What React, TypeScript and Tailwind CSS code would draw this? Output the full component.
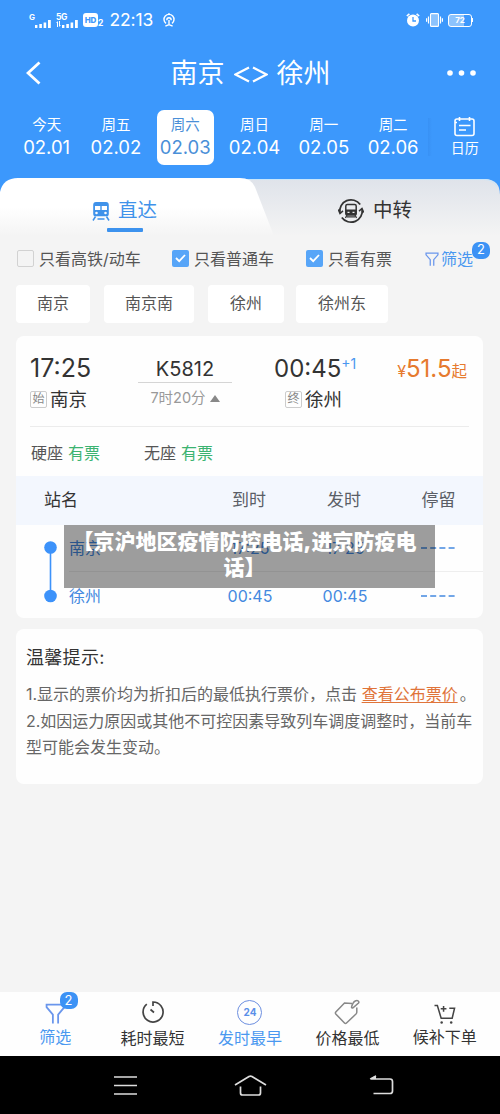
import { clsx } from "clsx";
import type { ReactNode } from "react";

const days = [
  { label: "今天", date: "02.01" },
  { label: "周五", date: "02.02" },
  { label: "周六", date: "02.03", active: true },
  { label: "周日", date: "02.04" },
  { label: "周一", date: "02.05" },
  { label: "周二", date: "02.06" },
];

const stations = [
  { name: "南京", width: "w-[74px]" },
  { name: "南京南", width: "w-[90px]" },
  { name: "徐州", width: "w-[76px]" },
  { name: "徐州东", width: "w-[92px]" },
];

const stops = [
  { name: "南京", arrive: "17:25", depart: "17:25" },
  { name: "徐州", arrive: "00:45", depart: "00:45" },
];

function SignalBars() {
  return (
    <svg width="17" height="8" viewBox="0 0 17 8" fill="currentColor">
      <rect x="0" y="5" width="2.4" height="3" />
      <rect x="4.3" y="4" width="2.6" height="4" />
      <rect x="8.6" y="2.5" width="2.6" height="5.5" />
      <rect x="13" y="0" width="2.8" height="8" />
    </svg>
  );
}

function StatusBar() {
  return (
    <div className="flex h-10 items-center pl-[29px] pr-[27px]">
      <div className="flex h-[15px] items-end">
        <span className="self-start text-[8px] font-bold leading-[8px]">G</span>
        <SignalBars />
      </div>
      <div className="ml-[4px] flex h-[15px] items-end">
        <div className="flex h-[15px] w-3 flex-col self-start">
          <span className="text-[8.5px] font-bold leading-[8px] tracking-[-0.5px]">5G</span>
          <svg width="5" height="6" viewBox="0 0 5 6" fill="currentColor">
            <path d="M0 2 2 0v6H1V2zM3 0h1v4h1L3 6z" />
          </svg>
        </div>
        <div className="-ml-[6px]"><SignalBars /></div>
      </div>
      <div className="ml-[4px] flex items-end">
        <span className="flex h-[14px] w-[15px] items-center justify-center rounded-[3px] bg-white text-[8px] font-extrabold text-[#3c98fc]">HD</span>
        <span className="text-[8.5px] font-bold leading-[7px]">2</span>
      </div>
      <span className="ml-[6px] text-[17.5px] tracking-[-0.1px]">22:13</span>
      <svg className="ml-[10px]" width="12" height="15" viewBox="0 0 12 15" fill="none" stroke="currentColor" strokeWidth="1.4">
        <path d="M3 10.400A5 5 0 1 1 9 10.400M3.800 7.200q0-2.400 2.200-2.400t2.200 2.400M6 7v5M2.400 13.200 6 11.500l3.600 1.700M6 0v2" />
      </svg>
      <div className="ml-auto flex items-center gap-[6px]">
        <svg width="14" height="14" viewBox="0 0 14 14" fill="none">
          <circle cx="7" cy="7.6" r="6" fill="white" />
          <path d="M.8 3 3.4.8M13.2 3 10.6.8" stroke="white" strokeWidth="1.6" />
          <path d="M7 4v4h3" stroke="#3c98fc" strokeWidth="1.3" />
        </svg>
        <svg width="17" height="14" viewBox="0 0 17 14" fill="none" stroke="white">
          <rect x="4.5" y=".6" width="8" height="12.8" rx="1" fill="#8cc3fd" strokeWidth="1.1" />
          <path d="M2.5 3.5v7M.6 5.2v3.6M14.5 3.5v7M16.4 5.2v3.6" strokeWidth="1.2" />
        </svg>
        <div className="-ml-[1px] flex items-center">
          <span className="flex h-[13px] w-[24px] items-center justify-center rounded-[3px] border border-white bg-[linear-gradient(90deg,#8cc3fd_70%,transparent_70%)] text-[8px] font-bold">72</span>
          <span className="h-1 w-[1px] bg-white" />
        </div>
      </div>
    </div>
  );
}

function Header() {
  return (
    <div className="h-[178px] bg-[#3c98fc] text-white">
      <StatusBar />
      <div className="flex h-[66px] items-center justify-between pl-[26px] pr-[24px]">
        <svg width="16" height="24" viewBox="0 0 16 24" fill="none" stroke="white" strokeWidth="2.8">
          <path d="M13.500 1.500 2 12l11.500 10.500" />
        </svg>
        <h1 className="ml-[12px] mt-[3px] flex items-center text-[27px]">
          南京
          <svg className="mx-[9px]" width="34" height="17" viewBox="0 0 34 17" fill="none" stroke="white" strokeWidth="2.200">
            <path d="M15 1.500 1.500 8.500l13.500 7M19 1.500l13.500 7-13.500 7" />
          </svg>
          徐州
        </h1>
        <svg width="29" height="6" viewBox="0 0 29 6" fill="white">
          <circle cx="3" cy="3" r="2.8" />
          <circle cx="14.5" cy="3" r="2.8" />
          <circle cx="26" cy="3" r="2.8" />
        </svg>
      </div>
      <div className="flex pl-[12px] pt-[4px]">
        {days.map((d) => (
          <div key={d.date} className="flex w-[69.3px] justify-center">
            <div
              className={clsx(
                "flex h-[55px] w-[57px] flex-col items-center rounded-[7px] pt-[4px]",
                d.active && "bg-white text-[#4a8fd8]"
              )}
            >
              <span className="text-[14.5px] leading-[21px]">{d.label}</span>
              <span className="whitespace-nowrap text-[18.5px] leading-[24px]">{d.date}</span>
            </div>
          </div>
        ))}
        <div className="mt-2 h-[38px] w-[4px] bg-gradient-to-r from-[#3891f4] to-[#3c98fc]" />
        <div className="ml-[19px] flex flex-col items-center pt-[6px]">
          <svg width="21" height="21" viewBox="0 0 21 21" fill="none" stroke="white" strokeWidth="1.6">
            <rect x="1" y="3" width="19" height="16.5" rx="2" />
            <path d="M1 6.500h2M5.500 1v4M15.500 1v4M5 9.500h11.500M5 14h7" />
          </svg>
          <span className="mt-[1px] text-[14px] leading-[20px]">日历</span>
        </div>
      </div>
    </div>
  );
}

function TrainIcon() {
  return (
    <svg width="18" height="19" viewBox="0 0 18 19">
      <path fill="#3f92ea" fillRule="evenodd" d="M4 0h10q2.800 0 2.800 3v9.200q0 2-2 2H3.200q-2 0-2-2V3Q1.200 0 4 0Zm-1 4v4h5.300V4Zm6.700 0v4H15V4ZM4.500 9.700a1.300 1.300 0 1 0 0 2.600 1.300 1.300 0 0 0 0-2.600Zm9 0a1.300 1.300 0 1 0 0 2.600 1.300 1.300 0 0 0 0-2.600Z" />
      <path stroke="#3f92ea" strokeWidth="1.5" d="m3.500 14.500-2.500 4M14.500 14.500l2.500 4M5.500 17h7" />
    </svg>
  );
}

function TransferIcon() {
  return (
    <svg width="26" height="26" viewBox="0 0 26 26" fill="none" stroke="#333" strokeWidth="1.8">
      <path d="M1.900 15A11.300 11.300 0 0 1 22.200 6.500M24.100 11A11.300 11.300 0 0 1 3.800 19.500" />
      <path d="M.2 11.500 2 15.500l3-2.600M25.800 14.500 24 10.500l-3 2.600" strokeWidth="1.400" />
      <rect x="7.800" y="6.500" width="10.400" height="10.500" rx="1.500" strokeWidth="1.500" />
      <path d="M8 12h10v4.500H8z" fill="#333" strokeWidth="1" />
      <path d="M9.500 14.300h2M14.500 14.300h2" stroke="#eee" strokeWidth="1.200" />
      <path d="m9 17-1.500 3M17 17l1.500 3M9 18.800h8" strokeWidth="1.300" />
    </svg>
  );
}

function Tabs() {
  return (
    <div className="relative h-[58px] bg-[#f4f4f4]">
      <svg className="absolute inset-0" width="500" height="58" viewBox="0 0 500 58">
        <defs>
          <linearGradient id="left" x2="0" y2="1">
            <stop offset=".5" stopColor="#fff" />
            <stop offset="1" stopColor="#f4f4f4" />
          </linearGradient>
          <linearGradient id="right" x2="0" y2="1">
            <stop offset="0" stopColor="#dfe3ea" />
            <stop offset="1" stopColor="#f4f4f4" />
          </linearGradient>
        </defs>
        <path fill="#3c98fc" d="M0 0h500v30H0z" />
        <path fill="url(#right)" d="M230 1h256q14 1 14 16v41H230z" />
        <path stroke="#c9e6fb" fill="none" d="M248 1.500h236q9 0 13 7" />
        <path fill="url(#left)" d="M0 14Q3 0 18 0h222q11 0 15 9l19 49H0z" />
      </svg>
      <div className="relative flex h-full text-[19.5px]">
        <div className="flex w-[250px] flex-col items-center">
          <div className="mt-[18px] flex h-[30px] items-center gap-[8px] pr-[1px] text-[#3f92ea]">
            <TrainIcon />
            <span>直达</span>
          </div>
          <span className="mt-[2px] h-[4px] w-[36px] rounded-[1px] bg-[#3c92ee]" />
        </div>
        <div className="mt-[18px] flex h-[30px] w-[250px] items-center justify-center gap-[9px] text-[#333]">
          <TransferIcon />
          <span>中转</span>
        </div>
      </div>
    </div>
  );
}

function CheckBox({ checked, children }: { checked?: boolean; children: ReactNode }) {
  return (
    <div className="flex items-center gap-[5px] whitespace-nowrap">
      <span
        className={clsx(
          "flex h-[17px] w-[17px] items-center justify-center rounded-[2px]",
          checked ? "bg-[#57a5f8]" : "border border-[#d2d2d2]"
        )}
      >
        {checked && (
          <svg width="11" height="9" viewBox="0 0 11 9" fill="none" stroke="white" strokeWidth="1.8">
            <path d="m1 4 3.200 3.200L10 1" />
          </svg>
        )}
      </span>
      <span>{children}</span>
    </div>
  );
}

function Funnel({ size }: { size: number }) {
  return (
    <svg width={size} height={size} viewBox="0 0 20 20" fill="none" stroke="#6a96ec" strokeWidth={size > 16 ? 1.7 : 1.8}>
      <path d="M7.500 19.500v-8.500L1.500 4V1.500h17V4l-6 7v8.500" />
    </svg>
  );
}

function Filters() {
  return (
    <div className="text-[16px] text-[#555]">
      <div className="flex h-[45px] items-center pl-[17px]">
        <div className="w-[155px]"><CheckBox>只看高铁/动车</CheckBox></div>
        <div className="w-[134px]"><CheckBox checked>只看普通车</CheckBox></div>
        <div className="w-[119px]"><CheckBox checked>只看有票</CheckBox></div>
        <div className="relative flex items-center gap-[2px] whitespace-nowrap text-[#4a98f0]">
          <Funnel size={14} />
          <span>筛选</span>
          <span className="absolute -top-[5px] left-[47px] flex h-[17px] w-[18px] items-center justify-center rounded-[7px] bg-[#3c92f5] text-[13px] text-white">2</span>
        </div>
      </div>
      <div className="flex pl-[16px] pt-[4px]">
        {stations.map((s, i) => (
          <div
            key={s.name}
            className={clsx("flex h-[38px] items-center justify-center rounded-[4px] bg-white pb-[2px]", s.width, i < 2 ? "mr-[14px]" : "mr-[12px]")}
          >
            {s.name}
          </div>
        ))}
      </div>
    </div>
  );
}

function Tag({ children }: { children: ReactNode }) {
  return (
    <span className="mr-[3px] flex h-[17px] w-[17px] items-center justify-center rounded-[2px] border border-[#ccc] text-[12px] leading-none text-[#888]">
      {children}
    </span>
  );
}

function TrainCard() {
  return (
    <div className="mx-4 mt-[13px] h-[282px] w-[467px] overflow-hidden rounded-[8px] bg-[#fefefe]">
      <div className="mx-[14px] flex h-[91px] border-b border-[#ececec] pt-[18px] text-[#333]">
        <div className="w-[108px]">
          <div className="text-[25px] leading-[29px]">17:25</div>
          <div className="mt-[2px] flex items-center text-[18.5px] leading-[28px]"><Tag>始</Tag>南京</div>
        </div>
        <div className="flex w-[94px] flex-col items-center">
          <div className="flex h-[29px] w-full items-center justify-center border-b border-[#d5d5d5] pt-[2px] text-[20px]">K5812</div>
          <div className="mt-[3px] flex items-center gap-[4px] text-[14.5px] leading-[24px] text-[#999]">
            7时20分
            <svg width="10" height="7" viewBox="0 0 10 7" fill="#888"><path d="M5 0l5 7H0z" /></svg>
          </div>
        </div>
        <div className="w-[122px] pl-[42px]">
          <div className="flex whitespace-nowrap text-[24px] leading-[29px]">
            00:45<span className="text-[14px] leading-[20px] text-[#4a98f0]">+1</span>
          </div>
          <div className="ml-[11px] mt-[2px] flex items-center whitespace-nowrap text-[18.5px] leading-[28px]"><Tag>终</Tag>徐州</div>
        </div>
        <div className="ml-auto mr-[2px] flex h-[29px] items-baseline whitespace-nowrap text-[24px] leading-[29px] text-[#e67a2e]">
          <span className="text-[16px]">¥</span>51.5<span className="text-[15.5px]">起</span>
        </div>
      </div>
      <div className="flex h-[49px] gap-[44px] pl-[15px] pt-[14px] text-[16px] leading-[24px] text-[#555]">
        <div>硬座<span className="ml-[5px] text-[#3cb371]">有票</span></div>
        <div>无座<span className="ml-[5px] text-[#3cb371]">有票</span></div>
      </div>
      <div className="grid h-[49px] grid-cols-[185px_96px_94px_93px] items-center bg-[#f3f7fe] text-center text-[17px] text-[#5a5e66]">
        <span className="pl-[28px] text-left text-[#333]">站名</span>
        <span>到时</span>
        <span>发时</span>
        <span className="pl-[2px]">停留</span>
      </div>
      <div className="flex pl-[28px] text-[16px] text-[#4489e0]">
        <svg className="mt-[15px] shrink-0" width="13" height="64" viewBox="0 0 13 64" fill="#3c92fa">
          <path d="M5.700 7h1.600v50H5.700z" />
          <circle cx="6.500" cy="7.500" r="6.300" />
          <circle cx="6.500" cy="56" r="6.300" />
        </svg>
        <div className="ml-[12px] w-[414px]">
          {stops.map((s, i) => (
            <div
              key={s.name}
              className={clsx(
                "grid h-[47px] grid-cols-[133px_96px_94px_91px] items-center text-center",
                i === 0 && "border-b border-[#eee] pb-[1px]"
              )}
            >
              <span className="text-left">{s.name}</span>
              <span>{s.arrive}</span>
              <span>{s.depart}</span>
              <svg className="mx-auto" width="34" height="2" viewBox="0 0 34 2">
                <path d="M0 1h34" stroke="#4489e0" strokeWidth="1.500" strokeDasharray="6 3.200" />
              </svg>
            </div>
          ))}
        </div>
      </div>
    </div>
  );
}

function Tips() {
  return (
    <div className="mx-4 mt-[11px] h-[155px] w-[467px] rounded-[8px] bg-[#fefefe] pl-[10px] pt-[16px]">
      <h2 className="text-[18px] leading-[26px] tracking-[0.3px] text-[#333]">温馨提示:</h2>
      <div className="mt-[10px] whitespace-nowrap text-[16px] leading-[26.5px] text-[#666]">
        <p>
          1.显示的票价均为折扣后的最低执行票价，点击 <a className="text-[#e0743a] underline underline-offset-2">查看公布票价</a>
          <span className="ml-[2px]">。</span>
        </p>
        <p>2.如因运力原因或其他不可控因素导致列车调度调整时，当前车</p>
        <p>型可能会发生变动。</p>
      </div>
    </div>
  );
}

function SortItem({ icon, label, active }: { icon: ReactNode; label: string; active?: boolean }) {
  return (
    <div className={clsx("flex flex-col items-center", active ? "text-[#4a98f0]" : "text-[#333]")}>
      <div className="flex h-[26px] items-center">{icon}</div>
      <span className="mt-[1px] text-[16px] leading-[24px]">{label}</span>
    </div>
  );
}

function BottomBar() {
  return (
    <div className="grid h-[64px] grid-cols-5 bg-[#fefefe] px-[6.500px] pt-[7px]">
      <div className="relative -mt-[1px]">
        <SortItem active label="筛选" icon={<span className="mt-[4px]"><Funnel size={21} /></span>} />
        <span className="absolute -top-[6px] left-[53px] flex h-[17px] w-[18px] items-center justify-center rounded-[7px] bg-[#3c92f5] text-[13px] text-white">2</span>
      </div>
      <SortItem
        label="耗时最短"
        icon={
          <svg width="22" height="22" viewBox="0 0 22 22" fill="none" stroke="#444" strokeWidth="1.700">
            <path d="M11 5V1a10 10 0 1 1-6.200 2.200M8.500 8.500l3.500 3" />
          </svg>
        }
      />
      <SortItem
        active
        label="发时最早"
        icon={
          <span className="flex h-[25px] w-[25px] items-center justify-center rounded-full border-[1.500px] border-[#6d8fe0] text-[10px] font-bold text-[#5a8fe8]">24</span>
        }
      />
      <SortItem
        label="价格最低"
        icon={
          <svg width="26" height="26" viewBox="0 0 26 26" fill="none" stroke="#888" strokeWidth="1.500">
            <path d="M18 4.500 10.500 4 1.800 13q-.8 1 0 2l8.700 9q1 1 2 0l9.500-9q1-1 .8-2.500v-4" />
            <path d="M17.500 8q0 1.500 1.500.8L24.500 4q.8-1-.3-2t-3 0Q19 3 17.500 8" />
          </svg>
        }
      />
      <div className="-mt-[1px]">
        <SortItem
          label="候补下单"
          icon={
            <svg className="mt-[6px]" width="22" height="21" viewBox="0 0 23 22" fill="none" stroke="#444" strokeWidth="1.600">
              <path d="M.5 1.500h3l4 13.500h11.500l2.500-10.500h-5.500M10 2v6M7 5h6" />
              <circle cx="8" cy="19.500" r="1.300" fill="#444" stroke="none" />
              <circle cx="18" cy="19.500" r="1.300" fill="#444" stroke="none" />
            </svg>
          }
        />
      </div>
    </div>
  );
}

function SystemNav() {
  return (
    <div className="flex h-[58px] items-center bg-black pl-[114px]">
      <svg width="23" height="19" viewBox="0 0 23 19" stroke="#ddd" strokeWidth="1.700">
        <path d="M0 1h23M0 9.500h23M0 18h23" />
      </svg>
      <svg className="ml-[97px]" width="33" height="21" viewBox="0 0 33 21" fill="none" stroke="#ddd" strokeWidth="1.700">
        <path d="M1 10 15 1.500q1.500-.8 3 0L32 10M6.500 11.500V18q0 2 2 2h16q2 0 2-2v-6.500" />
      </svg>
      <svg className="ml-[102px]" width="25" height="20" viewBox="0 0 25 20" fill="none" stroke="#ddd" strokeWidth="1.700">
        <path d="M7 1 1.500 4H21q2.500 0 2.500 2.500v9.500q0 2.500-2.500 2.500H4.500" />
        <path d="M7 .5V4H.5z" fill="#ddd" stroke="none" />
      </svg>
    </div>
  );
}

export default function App() {
  return (
    <div className="relative flex h-[1114px] w-[500px] flex-col overflow-hidden bg-[#f4f4f4] font-['Inter','Noto_Sans_CJK_SC',sans-serif]">
      <Header />
      <Tabs />
      <Filters />
      <TrainCard />
      <Tips />
      <div className="mt-auto">
        <BottomBar />
        <SystemNav />
      </div>
      <div className="absolute left-[64px] top-[525px] h-[63px] w-[371px] bg-black/[0.38] pl-[2px] pr-[12px] pt-[4px] text-center text-[21px] font-black leading-[26px] text-white">
        【京沪地区疫情防控电话,进京防疫电话】
      </div>
    </div>
  );
}
